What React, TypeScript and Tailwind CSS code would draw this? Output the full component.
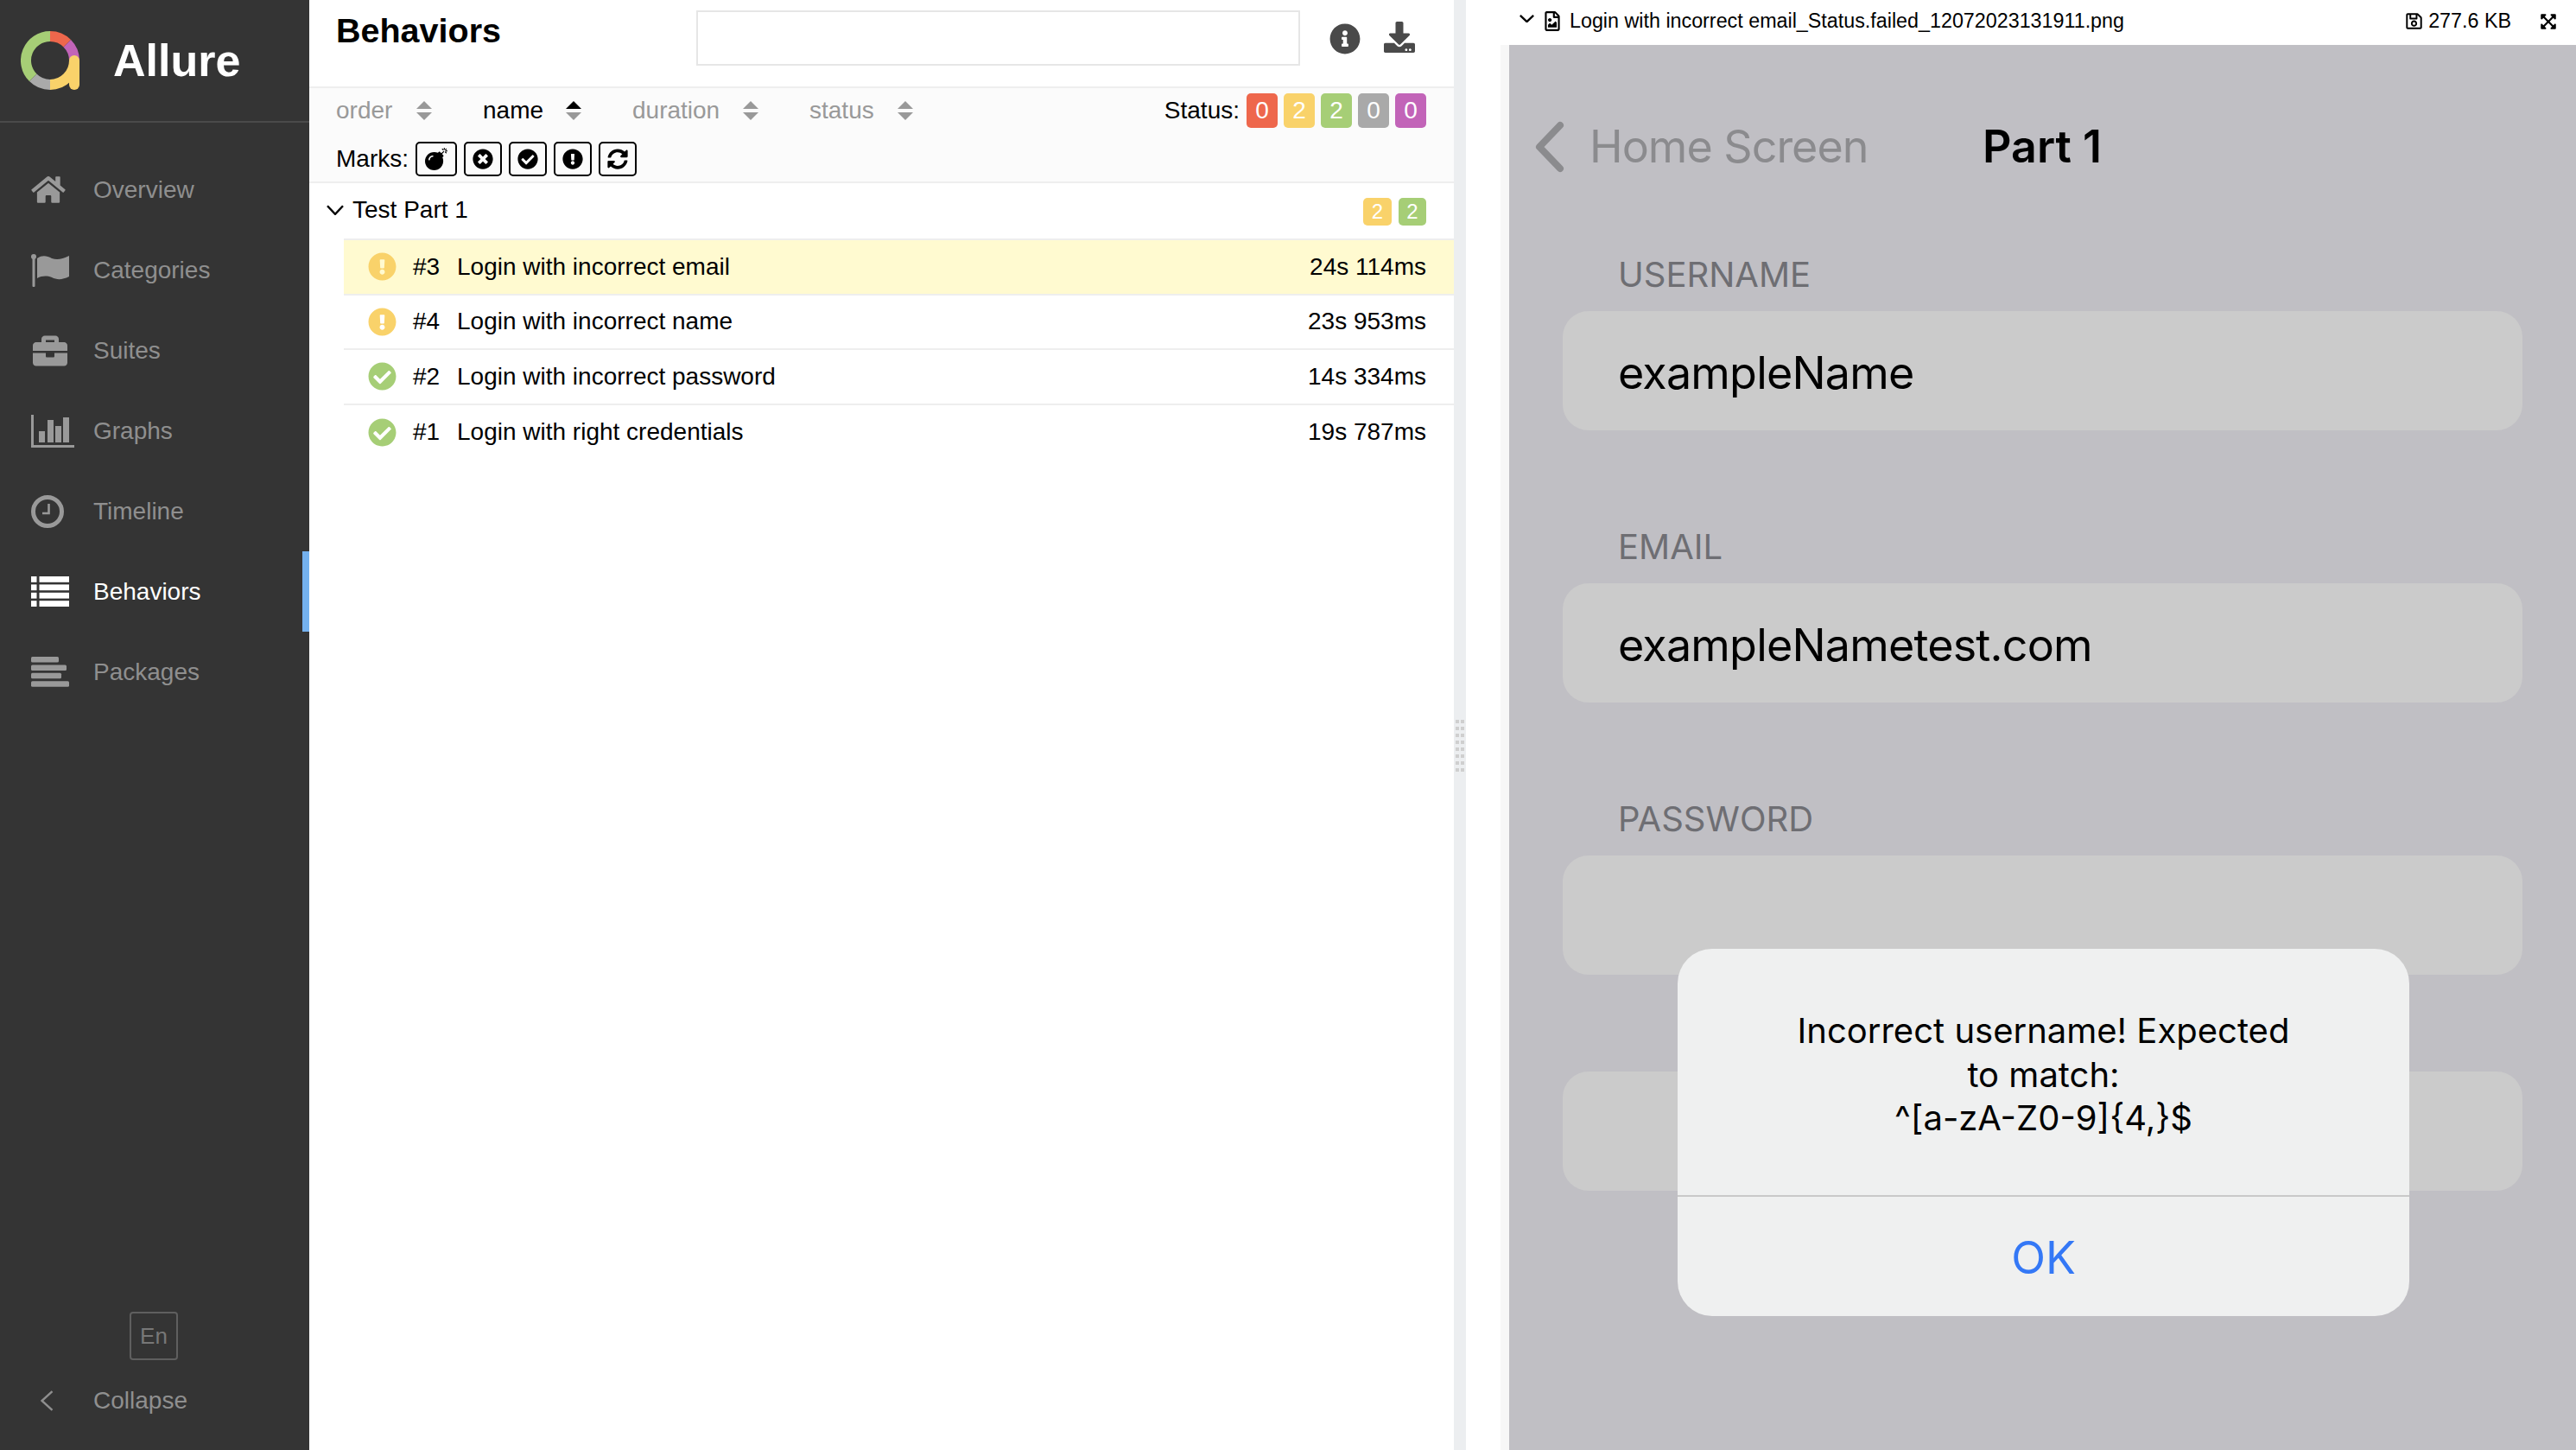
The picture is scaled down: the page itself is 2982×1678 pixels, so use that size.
import {
  FaBomb,
  FaBriefcase,
  FaCheckCircle,
  FaDownload,
  FaExclamationCircle,
  FaExpandArrowsAlt,
  FaHome,
  FaInfoCircle,
  FaRegFileImage,
  FaRegSave,
  FaSyncAlt,
  FaTimesCircle,
} from 'react-icons/fa';

// sidebar glyphs that react-icons has no close match for
function FlagIcon() {
  return (
    <svg viewBox="0 0 44 38" className="w-[44px] h-[38px]" fill="currentColor">
      <circle cx="3" cy="3" r="3" />
      <rect x="1.5" y="3" width="3" height="35" rx="1" />
      <path d="M7 5C13 1 18 2 24 5C30 7 36 6 44 2V26C36 30 30 30 24 27C18 25 13 25 7 28Z" />
    </svg>
  );
}

function GraphIcon() {
  return (
    <svg viewBox="0 0 50 38" className="w-[50px] h-[38px]" fill="currentColor">
      <rect x="0" y="0" width="3" height="38" />
      <rect x="0" y="35" width="50" height="3" />
      <rect x="9" y="19" width="7" height="13" />
      <rect x="19" y="6" width="7" height="26" />
      <rect x="28" y="13" width="7" height="19" />
      <rect x="37" y="3" width="7" height="29" />
    </svg>
  );
}

function ClockIcon() {
  return (
    <svg viewBox="0 0 38 38" className="w-[38px] h-[38px]" fill="none" stroke="currentColor">
      <circle cx="19" cy="19" r="16.5" strokeWidth="5" />
      <path d="M20.5 10V21H13" strokeWidth="2.6" />
    </svg>
  );
}

function ListIcon() {
  return (
    <svg viewBox="0 0 44 35" className="w-[44px] h-[35px]" fill="currentColor">
      {[0, 9.4, 18.8, 28.2].map((y) => (
        <g key={y}>
          <rect x="0" y={y} width="6.5" height="6.8" />
          <rect x="9.5" y={y} width="34.5" height="6.8" />
        </g>
      ))}
    </svg>
  );
}

function StreamIcon() {
  return (
    <svg viewBox="0 0 44 35" className="w-[44px] h-[35px]" fill="currentColor">
      <rect x="0" y="0" width="32" height="6.5" rx="1.5" />
      <rect x="0" y="9.4" width="41" height="6.5" rx="1.5" />
      <rect x="0" y="18.8" width="35" height="6.5" rx="1.5" />
      <rect x="0" y="28.2" width="44" height="6.5" rx="1.5" />
    </svg>
  );
}

function Chevron({ dir, className, width = 2.4 }: { dir: 'down' | 'left'; className: string; width?: number }) {
  return (
    <svg viewBox="0 0 20 20" className={className} fill="none" stroke="currentColor" strokeWidth={width} preserveAspectRatio="none">
      <path d={dir === 'down' ? 'M1 2L10 18L19 2' : 'M18 1L2 10L18 19'} vectorEffect="non-scaling-stroke" />
    </svg>
  );
}

const NAV = [
  { label: 'Overview', icon: <FaHome className="w-[40px] h-[35px]" /> },
  { label: 'Categories', icon: <FlagIcon /> },
  { label: 'Suites', icon: <FaBriefcase className="w-[44px] h-[40px]" /> },
  { label: 'Graphs', icon: <GraphIcon /> },
  { label: 'Timeline', icon: <ClockIcon /> },
  { label: 'Behaviors', icon: <ListIcon />, active: true },
  { label: 'Packages', icon: <StreamIcon /> },
];

const SORTS = [
  { label: 'order', w: 'w-[111px]', ml: '' },
  { label: 'name', w: 'w-[114px]', ml: 'ml-[59px]', active: true },
  { label: 'duration', w: 'w-[146px]', ml: 'ml-[59px]' },
  { label: 'status', w: 'w-[120px]', ml: 'ml-[59px]' },
];

const STATUS = [
  { n: 0, c: 'bg-[#ee674c]' },
  { n: 2, c: 'bg-[#f9d26a]' },
  { n: 2, c: 'bg-[#a6ce76]' },
  { n: 0, c: 'bg-[#a9a9a9]' },
  { n: 0, c: 'bg-[#c264b8]' },
];

const ROWS = [
  { id: '#3', name: 'Login with incorrect email', time: '24s 114ms', ok: false, selected: true },
  { id: '#4', name: 'Login with incorrect name', time: '23s 953ms', ok: false },
  { id: '#2', name: 'Login with incorrect password', time: '14s 334ms', ok: true },
  { id: '#1', name: 'Login with right credentials', time: '19s 787ms', ok: true },
];

function Logo() {
  return (
    <svg viewBox="0 0 68 68" className="w-[68px] h-[68px] shrink-0" fill="none" strokeWidth="12">
      <path d="M34 6A28 28 0 0 1 53.8 14.2" stroke="#ee674c" />
      <path d="M53.8 14.2A28 28 0 0 1 62 34" stroke="#c264b8" />
      <path d="M62 34A28 28 0 0 1 34 62" stroke="#f9d26a" />
      <path d="M62 34V62" stroke="#f9d26a" strokeLinecap="round" />
      <path d="M34 62A28 28 0 0 1 14.2 53.8" stroke="#aaaaaa" />
      <path d="M14.2 53.8A28 28 0 0 1 34 6" stroke="#a6ce76" />
    </svg>
  );
}

function SortArrows({ active }: { active?: boolean }) {
  return (
    <svg viewBox="0 0 18 22" className="w-[18px] h-[22px]">
      <path d="M9 0L18 9H0Z" fill={active ? '#000000' : '#999999'} />
      <path d="M9 22L18 13H0Z" fill="#999999" />
    </svg>
  );
}

function Sidebar() {
  return (
    <aside className="w-[358px] shrink-0 h-full bg-[#343434] flex flex-col">
      <div className="h-[142px] shrink-0 border-b-2 border-[#4a4a4a] flex items-center pl-[24px] pb-[1px]">
        <Logo />
        <span className="ml-[39px] text-[52px] leading-none font-bold text-white">Allure</span>
      </div>
      <nav className="pt-[31px]">
        {NAV.map((item) => (
          <div
            key={item.label}
            className={`h-[93px] flex items-center pl-[36px] relative ${item.active ? 'text-white' : 'text-[#999999]'}`}
          >
            <span className="w-[72px] shrink-0 flex items-center">{item.icon}</span>
            <span className={`text-[28px] ${item.active ? 'text-white' : 'text-[#8f8f8f]'}`}>{item.label}</span>
            {item.active && <span className="absolute right-0 top-0 bottom-0 w-[8px] bg-[#74b1ee]" />}
          </div>
        ))}
      </nav>
      <div className="mt-auto pb-[25px]">
        <div className="ml-[150px] w-[56px] h-[56px] rounded-[4px] border-2 border-[#5f5f5f] flex items-center justify-center text-[26px] text-[#777777]">
          En
        </div>
        <div className="mt-[15px] h-[64px] flex items-center pl-[47px] text-[#8f8f8f]">
          <Chevron dir="left" className="w-[15px] h-[24px] shrink-0" />
          <span className="ml-[46px] text-[28px]">Collapse</span>
        </div>
      </div>
    </aside>
  );
}

function BehaviorsPane() {
  return (
    <section className="w-[1325px] shrink-0 h-full bg-white flex flex-col">
      <div className="h-[100px] shrink-0 flex pl-[31px] pr-[44px]">
        <h2 className="w-[417px] pt-[11px] text-[39.5px] leading-[48px] font-bold text-black">Behaviors</h2>
        <div className="w-[700px] h-[64px] mt-[12px] border-2 border-[#e6e6e6]" />
        <FaInfoCircle className="ml-[34px] mt-[27px] w-[36px] h-[36px] text-[#4a4a4a]" />
        <FaDownload className="ml-[26px] mt-[25px] w-[38px] h-[36px] text-[#4a4a4a]" />
      </div>
      <div className="h-[112px] shrink-0 bg-[#fbfbfb] border-y-2 border-[#eeeeee] pl-[31px] pr-[32px] text-[28px]">
        <div className="flex items-center h-[48px] mt-[2px]">
          {SORTS.map((s) => (
            <div key={s.label} className={`${s.w} ${s.ml} flex items-center justify-between`}>
              <span className={s.active ? 'text-black' : 'text-[#999999]'}>{s.label}</span>
              <SortArrows active={s.active} />
            </div>
          ))}
          <span className="ml-auto mr-[8px] text-black">Status:</span>
          <div className="flex gap-[7px]">
            {STATUS.map((s, i) => (
              <span key={i} className={`${s.c} w-[36px] h-[40px] rounded-[5px] flex items-center justify-center text-white`}>
                {s.n}
              </span>
            ))}
          </div>
        </div>
        <div className="flex items-center h-[40px] mt-[12px]">
          <span className="text-black mr-[8px]">Marks:</span>
          <div className="flex gap-[8px]">
            {[
              <FaBomb key="bomb" className="w-[26px] h-[28px]" />,
              <FaTimesCircle key="x" className="w-[24px] h-[24px]" />,
              <FaCheckCircle key="ok" className="w-[24px] h-[24px]" />,
              <FaExclamationCircle key="ex" className="w-[24px] h-[24px]" />,
              <FaSyncAlt key="sync" className="w-[24px] h-[24px]" />,
            ].map((icon, i) => (
              <span
                key={i}
                className={`${i === 0 ? 'w-[48px]' : 'w-[44px]'} h-[40px] rounded-[5px] border-2 border-black flex items-center justify-center text-black`}
              >
                {icon}
              </span>
            ))}
          </div>
        </div>
      </div>
      <div className="h-[64px] shrink-0 flex items-center pl-[20px] pr-[32px] text-[28px] text-black">
        <Chevron dir="down" className="w-[20px] h-[12px] shrink-0 -mt-[2px]" />
        <span className="ml-[10px] -mt-[3px]">Test Part 1</span>
        <div className="ml-auto flex gap-[8px] mt-[2px]">
          <span className="w-[33px] h-[32px] rounded-[5px] bg-[#f9d26a] flex items-center justify-center text-white text-[24px]">2</span>
          <span className="w-[32px] h-[32px] rounded-[5px] bg-[#a6ce76] flex items-center justify-center text-white text-[24px]">2</span>
        </div>
      </div>
      <div className="ml-[40px] border-t-2 border-[#eeeeee]">
        {ROWS.map((r, i) => (
          <div
            key={r.id}
            className={`h-[63.5px] flex items-center pl-[28px] pr-[32px] text-[28px] text-black ${i < ROWS.length - 1 ? 'border-b-2 border-[#eeeeee]' : ''} ${r.selected ? 'bg-[#fffad0]' : ''}`}
          >
            {r.ok ? (
              <FaCheckCircle className="w-[33px] h-[33px] shrink-0 text-[#a6ce76]" />
            ) : (
              <FaExclamationCircle className="w-[33px] h-[33px] shrink-0 text-[#f9d26a]" />
            )}
            <span className="ml-[19px] w-[51px] shrink-0">{r.id}</span>
            <span>{r.name}</span>
            <span className="ml-auto">{r.time}</span>
          </div>
        ))}
      </div>
    </section>
  );
}

function Splitter() {
  return (
    <div className="w-[14px] shrink-0 h-full bg-[#eceef0] flex justify-center pt-[833px]">
      <div className="grid grid-cols-2 gap-x-[2px] gap-y-[4px] h-fit">
        {Array.from({ length: 16 }).map((_, i) => (
          <span key={i} className="w-[4px] h-[4px] bg-[#cfcfcf]" />
        ))}
      </div>
    </div>
  );
}

function MobileField({ label, value }: { label?: string; value?: string }) {
  return (
    <div>
      {label && <div className="h-[50px] mb-[17px] pl-[64px] text-[40px] leading-[50px] text-[#6e6e73]">{label}</div>}
      <div className="h-[138px] rounded-[30px] bg-[#cbcbcb] flex items-center pl-[64px] pt-[5px] text-[52px] tracking-[-0.8px] text-black">
        {value}
      </div>
    </div>
  );
}

function ScreenshotPane() {
  return (
    <section className="flex-1 h-full bg-white flex flex-col min-w-0">
      <div className="h-[52px] shrink-0 flex items-center pl-[62px] pr-[22px] pb-[3px] text-[23.3px] text-black">
        <Chevron dir="down" className="w-[17px] h-[9px] shrink-0 -mt-[6px]" />
        <FaRegFileImage className="ml-[11px] w-[20px] h-[23px] shrink-0" />
        <span className="ml-[10px]">Login with incorrect email_Status.failed_12072023131911.png</span>
        <FaRegSave className="ml-auto w-[21px] h-[21px] shrink-0" />
        <span className="ml-[6px]">277.6 KB</span>
        <FaExpandArrowsAlt className="ml-[33px] w-[20px] h-[20px] shrink-0" />
      </div>
      <div className="flex-1 min-h-0 pl-[40px] bg-white">
        <div className="h-full border-l-[10px] border-[#f7f7f7] bg-[#c0bfc4] relative overflow-hidden font-['Inter',sans-serif] px-[62px]">
          <div className="h-[70px] mt-[83px] mb-[88px] flex items-center -ml-[33px]">
            <svg viewBox="0 0 35 60" className="w-[35px] h-[60px] shrink-0" fill="none">
              <path d="M30 5L6 30L30 55" stroke="#8b8b8e" strokeWidth="8" strokeLinecap="round" strokeLinejoin="round" />
            </svg>
            <span className="ml-[29px] w-[455px] shrink-0 text-[52px] tracking-[-1px] text-[#8b8b8e]">Home Screen</span>
            <span className="text-[52px] font-semibold text-black">Part 1</span>
          </div>
          <div className="flex flex-col gap-[110px]">
            <MobileField label="USERNAME" value="exampleName" />
            <MobileField label="EMAIL" value="exampleNametest.com" />
            <MobileField label="PASSWORD" />
            <div className="mt-[2px]">
              <MobileField />
            </div>
          </div>
          <div className="absolute left-[195px] top-[1046px] w-[847px] h-[425px] rounded-[40px] bg-[#eff0f0] flex flex-col">
            <div className="h-[287px] shrink-0 pt-[7px] flex flex-col items-center justify-center text-[40px] leading-[50.5px] text-black border-b-2 border-[#c9c9c9]">
              <span>Incorrect username! Expected</span>
              <span>to match:</span>
              <span>^[a-zA-Z0-9]{'{'}4,{'}'}$</span>
            </div>
            <div className="flex-1 flex items-center justify-center pt-[3px] text-[52px] text-[#3478f6]">OK</div>
          </div>
        </div>
      </div>
    </section>
  );
}

export default function App() {
  return (
    <div className="w-[2982px] h-[1678px] overflow-hidden flex font-['Liberation_Sans',Arial,sans-serif] bg-white">
      <Sidebar />
      <BehaviorsPane />
      <Splitter />
      <ScreenshotPane />
    </div>
  );
}
